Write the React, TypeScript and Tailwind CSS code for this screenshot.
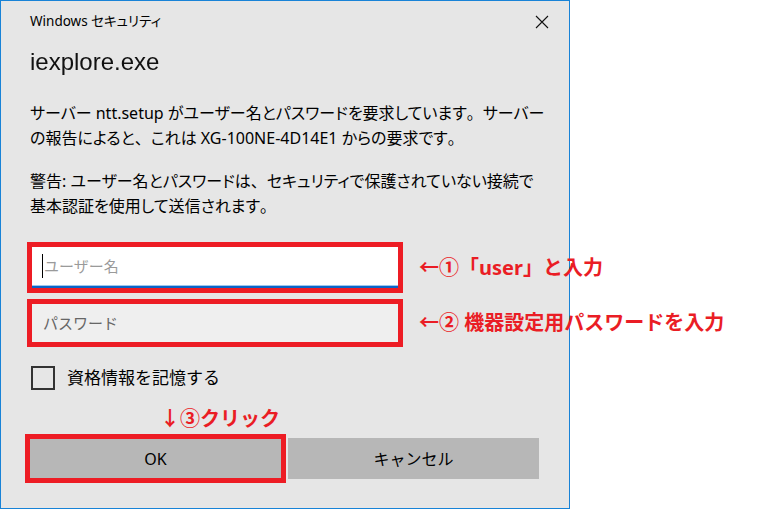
import React from "react";

const jp = "font-['Noto_Sans','Noto_Sans_CJK_JP',sans-serif]";
const palt = "[font-feature-settings:'palt']";
const note = "text-[20px] font-bold text-[#ea1d25] whitespace-nowrap [font-feature-settings:normal]";

// full-width punctuation, as the dialog font draws it
function P({ c }: { c: string }) {
  return <span className="[font-feature-settings:normal]">{c}</span>;
}

function CloseIcon() {
  return (
    <svg width="14" height="14" viewBox="0 0 14 14" className="block">
      <path d="M1 1 L13 13 M13 1 L1 13" stroke="#111" strokeWidth="1.1" />
    </svg>
  );
}

export default function App() {
  return (
    <div className={`w-[781px] h-[510px] bg-white ${jp}`}>
      {/* Dialog */}
      <div className="w-[570px] h-[509px] border border-[#1883d7] bg-[#e6e6e6] flex flex-col text-black">
        {/* Title bar */}
        <div className="h-[41px] flex items-center justify-between pl-[29px] pr-[20px]">
          <span className={`text-[13.5px] ${palt}`}>Windows セキュリティ</span>
          <CloseIcon />
        </div>

        {/* App name */}
        <div className="pl-[29px] h-[40px] leading-[40px] text-[24px] text-[#111] font-['Liberation_Sans',sans-serif] blur-[0.3px]">
          iexplore.exe
        </div>

        {/* Message */}
        <div className={`pl-[29px] mt-[19px] text-[16px] leading-[25px] whitespace-nowrap ${palt}`}>
          <p>
            サーバー ntt.setup がユーザー名とパスワードを要求しています<P c="。" />サーバー
            <br />
            の報告によると<P c="、" />これは XG-100NE-4D14E1 からの要求です<P c="。" />
          </p>
          <p className="mt-[18px]">
            警告: ユーザー名とパスワードは<P c="、" />セキュリティで保護されていない接続で
            <br />
            基本認証を使用して送信されます<P c="。" />
          </p>
        </div>

        {/* Username */}
        <div className="mt-[23px] ml-[26px] flex items-center gap-[16px]">
          <div className="w-[376px] h-[51px] shrink-0 border-[5px] border-[#ed1c24] bg-white flex flex-col">
            <div className="flex-1 flex items-center pl-[10px] text-[15px] text-[#9a9a9a]">
              <span className="w-px h-[24px] bg-black mr-px" />
              ユーザー名
            </div>
            <div className="h-[1px] bg-[#9cc7ee]" />
            <div className="h-[2px] bg-[#0a64c8]" />
          </div>
          <span className={note}>←①「user」と入力</span>
        </div>

        {/* Password */}
        <div className="mt-[6px] ml-[26px] flex items-center gap-[16px]">
          <div className="w-[376px] h-[48px] shrink-0 border-[5px] border-[#ed1c24] bg-[#efefef] flex items-center pl-[11px] text-[15px] text-[#666]">
            パスワード
          </div>
          <span className={note}>←② 機器設定用パスワードを入力</span>
        </div>

        {/* Remember */}
        <div className="mt-[19px] ml-[30px] h-[24px] flex items-center gap-[12px]">
          <span className="w-[24px] h-[24px] border-2 border-[#333]" />
          <span className="text-[17px]">資格情報を記憶する</span>
        </div>

        {/* Annotation 3 */}
        <div className={`mt-[18px] ml-[159px] h-[22px] leading-[22px] ${note}`}>
          ↓③クリック
        </div>

        {/* Buttons */}
        <div className="mt-[4px] ml-[24px] flex items-center gap-[2px]">
          <div className="w-[261px] h-[49px] border-[5px] border-[#ed1c24] bg-[#b7b7b7] flex items-center justify-center text-[16px]">
            OK
          </div>
          <div className="w-[251px] h-[41px] bg-[#b7b7b7] flex items-center justify-center text-[16px]">
            キャンセル
          </div>
        </div>
      </div>
    </div>
  );
}
